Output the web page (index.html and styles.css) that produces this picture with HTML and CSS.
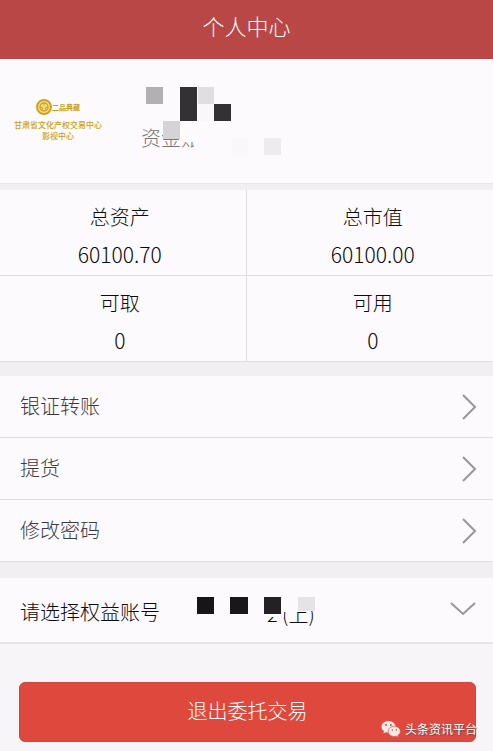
FILE: index.html
```html
<!DOCTYPE html>
<html lang="zh-CN">
<head>
  <meta charset="UTF-8" />
  <meta name="viewport" content="width=device-width, initial-scale=1" />
  <title>个人中心</title>
  <link rel="stylesheet" href="styles.css">
</head>
<body>
  <header class="header">
    <h1>个人中心</h1>
  </header>

  <main>
    <section class="profile">
      <div class="logo">
        <div class="logo-top">
          <svg width="16" height="16" viewBox="0 0 16 16" fill="none" stroke="#d0a220">
            <circle cx="8" cy="8" r="7" fill="#f5e08a" stroke-width="2" />
            <circle cx="8" cy="8" r="4" stroke-width="1.5" />
            <path d="M8 4v3M4 9l3-1M12 9l-3-1M6 12l1-3M10 12l-1-3" />
          </svg>
          <span>二品典藏</span>
        </div>
        <div class="logo-name">甘肃省文化产权交易中心</div>
        <div class="logo-name">影视中心</div>
      </div>
      <div class="user">
        <p>资金账</p>
        <!-- 遮挡姓名和账号 -->
        <svg class="mosaic" width="144" height="76" viewBox="0 0 144 76">
          <rect x="39" y="40" width="24" height="17" fill="#fcfafc" />
          <rect x="53" y="57" width="10" height="14" fill="#fcfafc" />
          <rect x="5" y="2" width="17" height="17" fill="#b2b0b2" />
          <rect x="39" y="2" width="17" height="34" fill="#333133" />
          <rect x="57" y="2" width="16" height="17" fill="#e0dee0" />
          <rect x="57" y="19" width="16" height="17" fill="#f9f7f9" />
          <rect x="73" y="19" width="17" height="17" fill="#333133" />
          <rect x="22" y="36" width="17" height="18" fill="#d5d3d5" />
          <rect x="91" y="53" width="16" height="17" fill="#f9f7f9" />
          <rect x="123" y="53" width="17" height="17" fill="#edebed" />
        </svg>
      </div>
    </section>

    <dl class="assets">
      <div>
        <dt>总资产</dt>
        <dd>60100.70</dd>
      </div>
      <div>
        <dt>总市值</dt>
        <dd>60100.00</dd>
      </div>
      <div>
        <dt>可取</dt>
        <dd>0</dd>
      </div>
      <div>
        <dt>可用</dt>
        <dd>0</dd>
      </div>
    </dl>

    <nav class="menu">
      <a href="#">银证转账
        <svg width="16" height="28" viewBox="0 0 16 28"><path d="M2 3l12 12L2 27" /></svg>
      </a>
      <a href="#">提货
        <svg width="16" height="28" viewBox="0 0 16 28"><path d="M2 3l12 12L2 27" /></svg>
      </a>
      <a href="#">修改密码
        <svg width="16" height="28" viewBox="0 0 16 28"><path d="M2 3l12 12L2 27" /></svg>
      </a>
    </nav>

    <div class="account">
      <label for="account">请选择权益账号</label>
      <div class="account-box">
        <select id="account">
          <option>2 (上)</option>
        </select>
        <svg class="mosaic" width="124" height="20" viewBox="0 0 124 20">
          <rect x="0" y="0" width="88" height="20" fill="#fcfafc" />
          <rect x="88" y="0" width="26" height="15" fill="#fcfafc" />
          <rect x="1" y="0" width="17" height="17" fill="#171518" />
          <rect x="34" y="0" width="18" height="17" fill="#19171a" />
          <rect x="68" y="0" width="17" height="17" fill="#232124" />
          <rect x="102" y="0" width="17" height="14" fill="#e5e3e5" />
        </svg>
        <svg class="arrow" width="28" height="16" viewBox="0 0 28 16"><path d="M2 2l12 11L26 2" /></svg>
      </div>
    </div>
  </main>

  <div class="bottom">
    <button class="logout" type="button">退出委托交易</button>
    <div class="watermark">
      <svg width="20" height="18" viewBox="0 0 20 18">
        <path fill="#fbe9e6" d="M7.500 1C3.500 1 .5 3.600 .5 6.800c0 1.800 1 3.400 2.500 4.500L2.400 13.500l2.500-1.300c.8.2 1.600.4 2.600.4C11.400 12.600 14.500 10 14.500 6.800S11.400 1 7.500 1z" />
        <path fill="#fbe9e6" stroke="#d9493e" stroke-width=".7" d="M13.300 6.300c-3.400 0-6.100 2.300-6.100 5.100s2.700 5.100 6.100 5.100c.7 0 1.400-.1 2-.3l2.200 1.200-.6-1.900c1.500-1 2.500-2.500 2.500-4.100 0-2.800-2.700-5.100-6.100-5.100z" />
        <g fill="#a8483f">
          <circle cx="5" cy="5" r=".9" />
          <circle cx="9.800" cy="5" r=".9" />
          <circle cx="11.300" cy="10" r=".7" />
          <circle cx="15.300" cy="10" r=".7" />
        </g>
      </svg>
      <span>头条资讯平台</span>
    </div>
  </div>
</body>
</html>
```

FILE: styles.css
```css
* {
  box-sizing: border-box;
}
body {
  margin: 0;
  background-color: #f7f5f7;
  color: #0c0a0c;
  font-family: "Noto Sans CJK SC", sans-serif;
  font-size: 20px;
  font-weight: 300;
  line-height: 30px;
}
h1, p, dl, dd {
  margin: 0;
}
main {
  background-color: #f1eff1;
}

.header {
  padding: 10px 0 19px;
  background-color: #b84746;
  color: #fff;
  text-align: center;
}
.header h1 {
  font-size: 22px;
  font-weight: 300;
}

/* 用户信息 */
.profile {
  display: flex;
  align-items: flex-start;
  gap: 39px;
  padding: 26px 14px 24px;
  background-color: #fcfafc;
  border-bottom: 1px solid #e6e4e6;
}
.logo {
  padding-top: 14px;
  color: #cc9f20;
  font-size: 8px;
  font-weight: 500;
  line-height: 11px;
  text-align: center;
}
.logo-top {
  display: flex;
  align-items: center;
  justify-content: center;
  margin-bottom: 4px;
  font-size: 7px;
  font-weight: 700;
}
.user {
  position: relative;
  min-height: 74px;
  padding-top: 38px;
  color: #757375;
}
.mosaic {
  position: absolute;
  top: 0;
  left: 0;
}

/* 资产 */
.assets {
  display: grid;
  grid-template-columns: 1fr 1fr;
  margin-top: 6px;
  background-color: #fcfafc;
  border-bottom: 1px solid #e0dee0;
  text-align: center;
}
.assets div {
  padding: 12px 6px 0 0;
  border-right: 1px solid #e0dee0;
}
.assets div:nth-child(even) {
  padding: 12px 0 0 6px;
  border-right: none;
}
.assets div:nth-child(-n+2) {
  border-bottom: 1px solid #e0dee0;
}
.assets dt {
  margin-bottom: 7px;
}
.assets dd {
  padding-bottom: 6px;
  font-size: 21px;
}

/* 菜单 */
.menu {
  margin-top: 14px;
  background-color: #fcfafc;
}
.menu a {
  display: flex;
  align-items: center;
  justify-content: space-between;
  padding: 15px 16px 16px 20px;
  border-bottom: 1px solid #dfdddf;
  color: #3d3b3d;
  text-decoration: none;
}
.menu svg, .arrow {
  fill: none;
  stroke: #98969a;
  stroke-width: 2;
}

/* 权益账号 */
.account {
  display: flex;
  gap: 36px;
  margin-top: 16px;
  padding: 19px 16px 13px 20px;
  background-color: #fcfafc;
  border-bottom: 2px solid #e6e4e7;
}
.account-box {
  position: relative;
  flex: 1;
}
.account select {
  display: block;
  width: 100%;
  height: 32px;
  padding: 2px 0 0 71px;
  border: none;
  background: none;
  appearance: none;
  color: inherit;
  font: inherit;
}
.arrow {
  position: absolute;
  top: 4px;
  right: 0;
  pointer-events: none;
}

.bottom {
  position: relative;
  padding: 38px 17px 9px 19px;
}
.logout {
  display: block;
  width: 100%;
  height: 60px;
  padding: 0 0 3px;
  border: 1px solid #d0473f;
  border-radius: 6px;
  background-color: #df493d;
  color: #fff;
  font: inherit;
}
.watermark {
  position: absolute;
  right: 16px;
  bottom: 13px;
  display: flex;
  align-items: center;
  gap: 4px;
  color: #fff;
  font-size: 12px;
  font-weight: 400;
  line-height: 18px;
  text-shadow: 1px 1px 1px #555;
}
```
